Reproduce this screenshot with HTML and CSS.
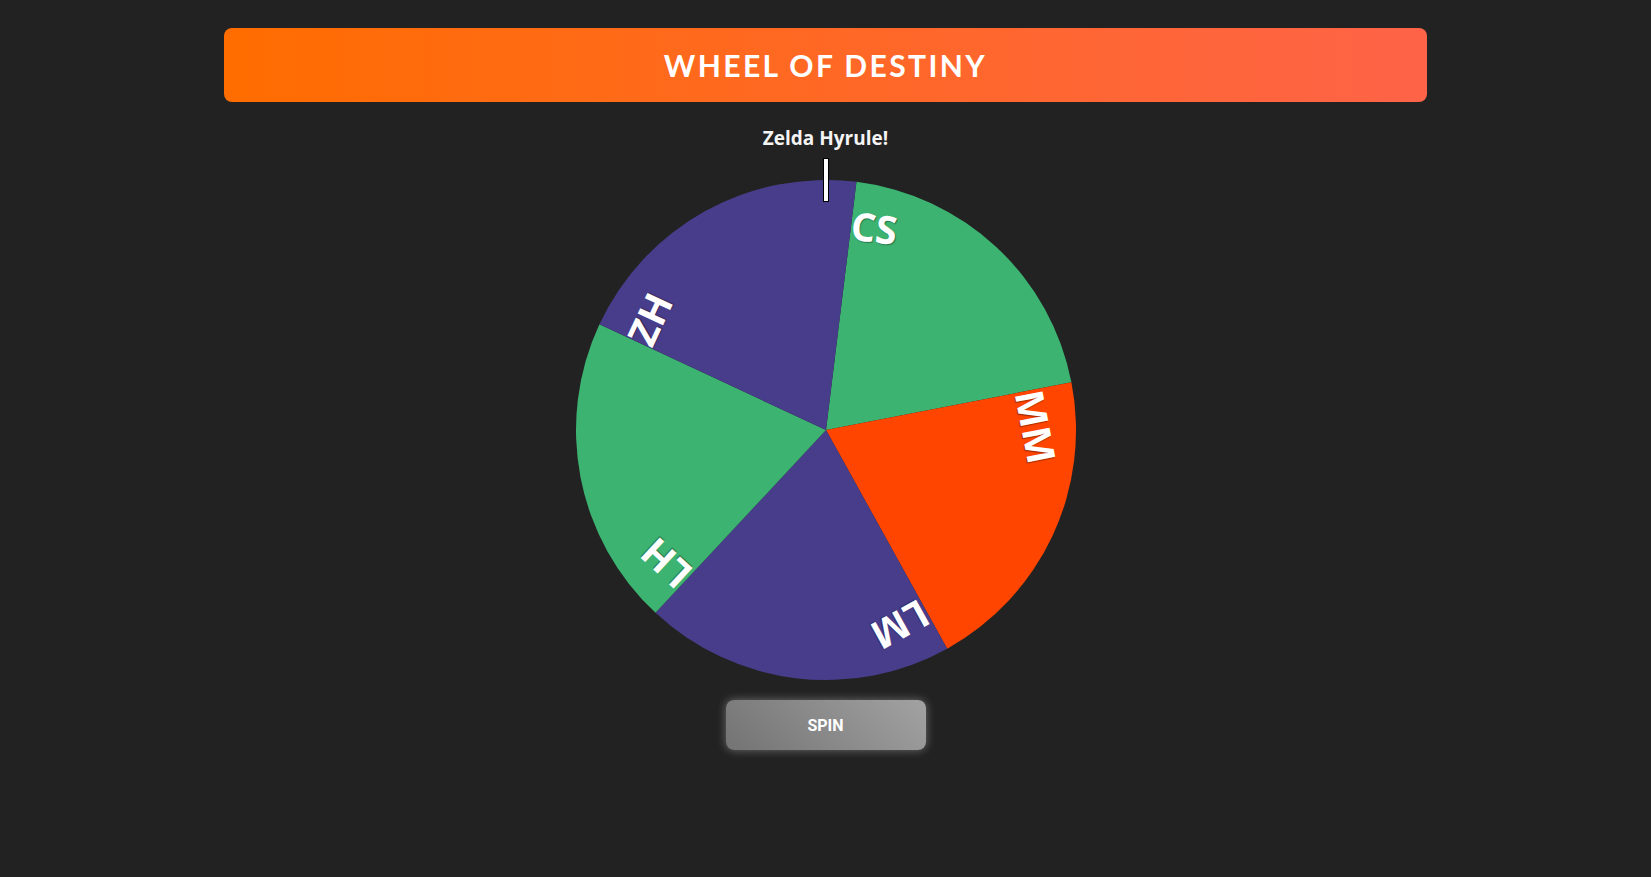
FILE: index.html
```html
<!DOCTYPE html>
<html lang="en">
<head>
<meta charset="utf-8">
<title>Wheel of Destiny</title>
<link rel="stylesheet" href="styles.css">
</head>
<body>
<main class="app">
  <header class="banner">
    <h1 class="banner-title">WHEEL OF DESTINY</h1>
  </header>
  <div class="result">Zelda Hyrule!</div>
  <div class="wheel-wrap">
    <svg class="wheel" viewBox="0 0 500 500" width="500" height="500">
      <path d="M250 250 L280.47 1.86 A250 250 0 0 1 495.41 202.30 Z" fill="#3cb371"/>
      <path d="M250 250 L495.41 202.30 A250 250 0 0 1 371.20 468.65 Z" fill="#ff4500"/>
      <path d="M250 250 L371.20 468.65 A250 250 0 0 1 79.50 432.84 Z" fill="#483d8b"/>
      <path d="M250 250 L79.50 432.84 A250 250 0 0 1 23.42 144.35 Z" fill="#3cb371"/>
      <path d="M250 250 L23.42 144.35 A250 250 0 0 1 280.47 1.86 Z" fill="#483d8b"/>
    </svg>
    <span class="seg-label" style="transform: rotate(7deg) translate(0, -227px)">CS</span>
    <span class="seg-label" style="transform: rotate(79deg) translate(0, -227px)">MM</span>
    <span class="seg-label" style="transform: rotate(151deg) translate(0, -227px)">LM</span>
    <span class="seg-label" style="transform: rotate(223deg) translate(0, -227px)">LH</span>
    <span class="seg-label" style="transform: rotate(295deg) translate(0, -227px)">ZH</span>
    <div class="pointer"></div>
  </div>
  <button class="spin-btn" type="button">SPIN</button>
</main>
</body>
</html>
```

FILE: styles.css
```css
* {
  box-sizing: border-box;
}

html, body {
  margin: 0;
  padding: 0;
}

body {
  background: #222222;
  min-height: 877px;
  font-family: "Open Sans", "Liberation Sans", sans-serif;
  color: #ffffff;
}

.app {
  display: flex;
  flex-direction: column;
  align-items: center;
  padding-top: 28px;
}

.banner {
  width: 1203px;
  height: 74px;
  border-radius: 8px;
  background: linear-gradient(to right, #ff6d00, #ff6348);
  display: flex;
  align-items: center;
  justify-content: center;
}

.banner-title {
  margin: 0;
  font-family: "Lato", "Open Sans", sans-serif;
  font-weight: 700;
  font-size: 30px;
  letter-spacing: 2.4px;
  line-height: 1;
  color: #ffffff;
}

.result {
  margin-top: 23px;
  font-family: "Open Sans", "Liberation Sans", sans-serif;
  font-weight: 700;
  font-size: 19px;
  line-height: 26px;
  color: #f4f4f4;
}

.wheel-wrap {
  position: relative;
  width: 500px;
  height: 500px;
  margin-top: 29px;
}

.wheel {
  display: block;
  width: 500px;
  height: 500px;
}

.seg-label {
  position: absolute;
  left: 250px;
  top: 250px;
  transform-origin: 0 0;
  font-family: "Open Sans", "Liberation Sans", sans-serif;
  font-weight: 700;
  font-size: 39px;
  line-height: 39px;
  white-space: nowrap;
  color: #ffffff;
  text-shadow: 1px 1px 1px rgba(0, 0, 0, 0.35);
}

.pointer {
  position: absolute;
  left: 247px;
  top: -22px;
  width: 6px;
  height: 44px;
  background: #ffffff;
  border: 1.5px solid #000000;
}

.spin-btn {
  margin-top: 20px;
  width: 200px;
  height: 50px;
  border: none;
  border-radius: 8px;
  background: linear-gradient(45deg, #737373, #a2a2a2);
  box-shadow: 0 0 10px rgba(255, 255, 255, 0.35);
  font-family: "Roboto", "Liberation Sans", sans-serif;
  font-weight: 700;
  font-size: 16px;
  color: #ffffff;
  cursor: pointer;
}
```
